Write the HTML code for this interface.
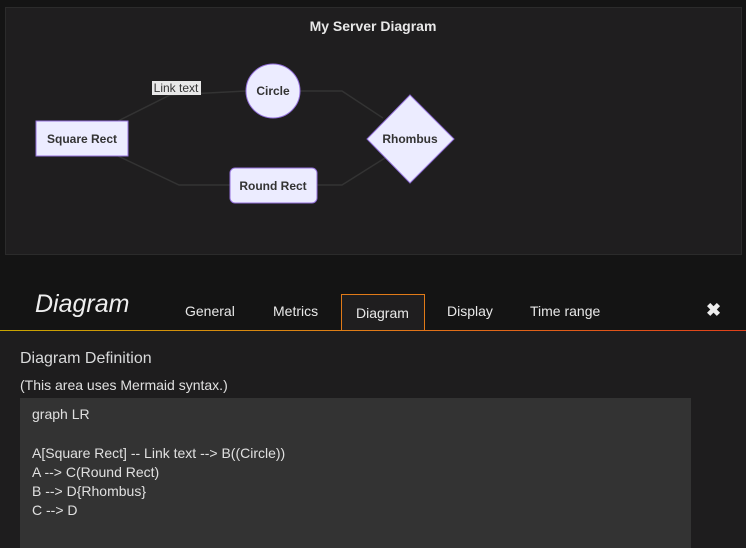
<!DOCTYPE html>
<html><head><style>
body{margin:0;width:746px;height:548px;background:#141414;font-family:"Liberation Sans",sans-serif;overflow:hidden;position:relative;color:#d8d9da}
.panel{position:absolute;left:5px;top:7px;width:735px;height:246px;background:#1f1e1f;border:1px solid #2b2b2b}
.hdr{position:absolute;left:0;top:270px;width:746px;height:60px;background:#141414}
.line{position:absolute;left:0;top:330px;width:746px;height:1px;background:linear-gradient(90deg,#c8a600,#e07a18 50%,#e0401a)}
.tab{position:absolute;top:303px;font-size:14px;color:#e8e8e8}
.active{position:absolute;left:341px;top:294px;width:84px;height:37px;background:#1f1e1f;border:1px solid #e07a18;border-bottom:none;box-sizing:border-box}
.body{position:absolute;left:0;top:331px;width:746px;height:217px;background:#1e1d1e}
.ta{position:absolute;left:20px;top:398px;width:671px;height:150px;background:#333;font-size:14px;color:#e0e0e0}
.ta div{position:absolute;left:12px}
</style></head><body>
<div class="panel"></div>
<svg style="position:absolute;left:0;top:0" width="746" height="260">
<text x="373" y="31" text-anchor="middle" font-family="Liberation Sans" font-weight="bold" font-size="14" fill="#e8e8e8">My Server Diagram</text>
<g stroke="#333" stroke-width="1.5" fill="none">
<polyline points="118,121 170,95 246,91"/>
<polyline points="300,91 342,91 383,118"/>
<polyline points="118,156 179,185 230,185"/>
<polyline points="317,185 342,185 385,158"/>
</g>
<rect x="152" y="81" width="49" height="14" fill="#e8e8e8"/>
<text x="176" y="92" text-anchor="middle" font-size="12" fill="#333" font-family="Liberation Sans">Link text</text>
<g fill="#ececff" stroke="#9370db" stroke-width="1">
<rect x="36" y="121" width="92" height="35"/>
<ellipse cx="273" cy="91" rx="27" ry="27"/>
<rect x="230" y="168" width="87" height="35" rx="5"/>
<polygon points="410,95 454,139 410,183 367,139"/>
</g>
<g font-size="12" fill="#333" text-anchor="middle" font-family="Liberation Sans" font-weight="bold">
<text x="82" y="143">Square Rect</text>
<text x="273" y="95">Circle</text>
<text x="273" y="190">Round Rect</text>
<text x="410" y="143">Rhombus</text>
</g>
</svg>
<div class="hdr"></div>
<div class="body"></div>
<div class="active"></div>
<div class="line"></div>
<div style="position:absolute;left:35px;top:290px;font-size:25px;font-style:italic;color:#eee">Diagram</div>
<div class="tab" style="left:185px">General</div>
<div class="tab" style="left:273px">Metrics</div>
<div class="tab" style="left:356px;top:305px">Diagram</div>
<div class="tab" style="left:447px">Display</div>
<div class="tab" style="left:530px">Time range</div>
<div style="position:absolute;left:706px;top:300px;font-size:18px;font-weight:bold;color:#eee">✖</div>
<div style="position:absolute;left:20px;top:350px;font-size:16px;color:#d8d9da">Diagram Definition</div>
<div style="position:absolute;left:20px;top:377px;font-size:14px;color:#e0e0e0">(This area uses Mermaid syntax.)</div>
<div class="ta">
<div style="top:8px">graph LR</div>
<div style="top:47px">A[Square Rect] -- Link text --&gt; B((Circle))</div>
<div style="top:66px">A --&gt; C(Round Rect)</div>
<div style="top:85px">B --&gt; D{Rhombus}</div>
<div style="top:104px">C --&gt; D</div>
</div>
</body></html>
